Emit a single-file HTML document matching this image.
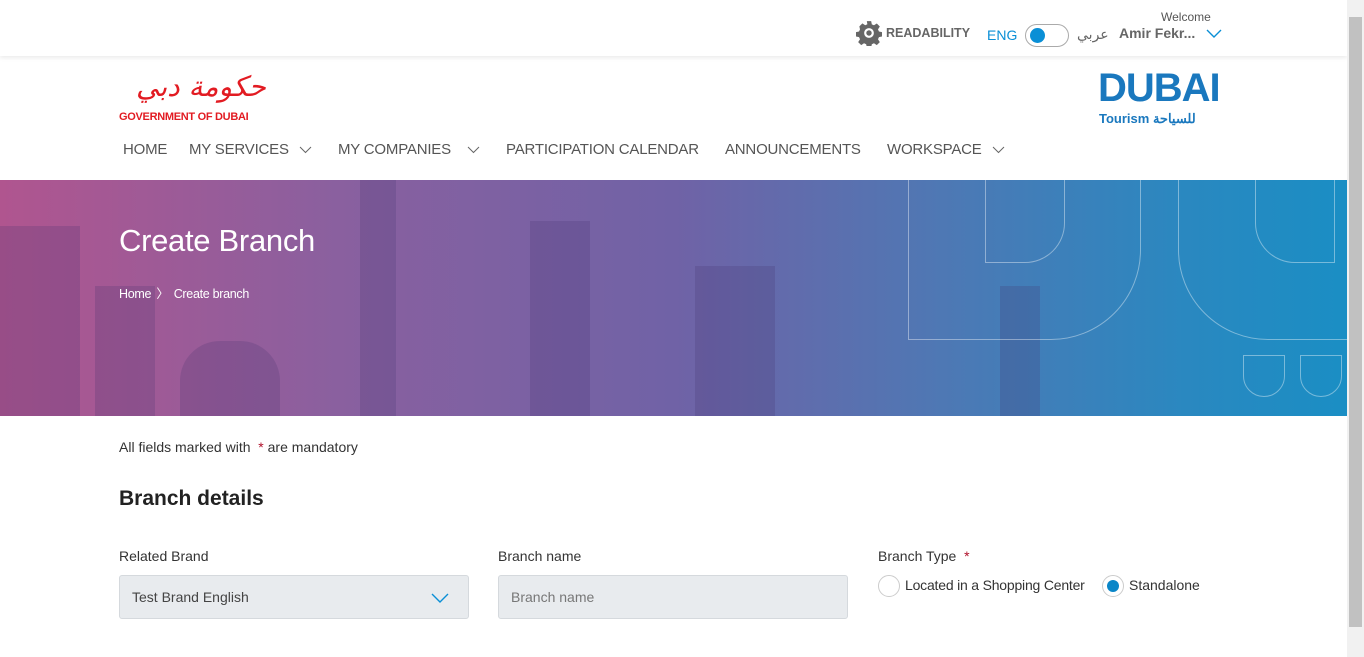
<!DOCTYPE html>
<html><head><meta charset="utf-8"><style>
*{box-sizing:border-box;margin:0;padding:0}
body{width:1364px;height:657px;overflow:hidden;font-family:"Liberation Sans","Noto Sans CJK SC",sans-serif;background:#fff;position:relative;color:#222}
.sb{position:absolute;right:0;top:0;width:17px;height:657px;background:#f1f1f1}
.sb .th{position:absolute;left:2px;top:17px;width:13px;height:610px;background:#c1c1c1}
.top{position:absolute;left:0;top:0;width:1347px;height:56px;background:#fff;box-shadow:0 2px 4px rgba(0,0,0,.08)}
.a{position:absolute;white-space:nowrap}
.nav{font-size:15px;color:#555;top:141px;letter-spacing:-.2px}
.banner{position:absolute;left:0;top:180px;width:1347px;height:236px;background:linear-gradient(90deg,#b0558f 0%,#8a609f 25%,#7062a6 50%,#4e78b4 70%,#2a88c0 88%,#1a8ec4 100%);overflow:hidden}
.bld{position:absolute;bottom:0;background:rgba(70,50,110,.22)}
.lbl{font-size:14px;color:#333}
.inp{position:absolute;top:575px;height:44px;width:350px;background:#e8ebee;border:1px solid #d5d9dd;border-radius:3px;font-size:14px;padding:13px 12px;color:#444}
.rad{position:absolute;top:575px;width:22px;height:22px;border-radius:50%;border:1px solid #ccc;background:#fff}
</style></head><body>
<div class="top">
 <svg class="a" style="left:856px;top:20px" width="26" height="26" viewBox="0 0 24 24"><path fill="#666" d="M10 1h4l.6 3 2 .9 2.6-1.7 2.8 2.8-1.7 2.6.9 2 3 .6v4l-3 .6-.9 2 1.7 2.6-2.8 2.8-2.6-1.7-2 .9-.6 3h-4l-.6-3-2-.9-2.6 1.7-2.8-2.8 1.7-2.6-.9-2-3-.6v-4l3-.6.9-2L3.1 5.9l2.8-2.8 2.6 1.7 2-.9z"/><circle cx="12" cy="12" r="4.5" fill="#fff"/><circle cx="12" cy="12" r="2.5" fill="#666"/></svg>
 <div class="a" style="left:886px;top:26px;font-size:12.5px;font-weight:bold;color:#666">READABILITY</div>
 <div class="a" style="left:987px;top:27px;font-size:14px;color:#0a8fd6">ENG</div>
 <div class="a" style="left:1025px;top:24px;width:44px;height:23px;border:1px solid #aaa;border-radius:12px"><div style="position:absolute;left:4px;top:3px;width:15px;height:15px;border-radius:50%;background:#0a8fd6"></div></div>
 <div class="a" style="left:1077px;top:26px;font-size:14px;color:#666">عربي</div>
 <div class="a" style="left:1161px;top:10px;font-size:12px;color:#555">Welcome</div>
 <div class="a" style="left:1119px;top:25px;font-size:14px;font-weight:bold;color:#666">Amir Fekr...</div>
 <svg class="a" style="left:1206px;top:29px" width="16" height="10"><path d="M1 1l7 7 7-7" stroke="#0a8fd6" fill="none" stroke-width="1.4"/></svg>
</div>
<div class="a" style="left:136px;top:70px;font-size:28px;color:#e21b22;font-family:'DejaVu Serif',serif;font-style:italic">حكومة دبي</div>
<div class="a" style="left:119px;top:111px;font-size:11px;font-weight:bold;color:#e21b22;letter-spacing:-.3px">GOVERNMENT OF DUBAI</div>
<div class="a" style="left:1098px;top:66px;font-size:40px;font-weight:bold;color:#1a78be;letter-spacing:-1px">DUBAI</div>
<div class="a" style="left:1099px;top:111px;font-size:13px;font-weight:bold;color:#1a78be">Tourism للسياحة</div>
<div class="a nav" style="left:123px">HOME</div>
<div class="a nav" style="left:189px">MY SERVICES</div>
<svg class="a" style="left:299px;top:146px" width="13" height="8"><path d="M1 1l5.5 5.5L12 1" stroke="#666" fill="none"/></svg>
<div class="a nav" style="left:338px">MY COMPANIES</div>
<svg class="a" style="left:467px;top:146px" width="13" height="8"><path d="M1 1l5.5 5.5L12 1" stroke="#666" fill="none"/></svg>
<div class="a nav" style="left:506px">PARTICIPATION CALENDAR</div>
<div class="a nav" style="left:725px">ANNOUNCEMENTS</div>
<div class="a nav" style="left:887px">WORKSPACE</div>
<svg class="a" style="left:992px;top:146px" width="13" height="8"><path d="M1 1l5.5 5.5L12 1" stroke="#666" fill="none"/></svg>
<div class="banner">
 <div class="bld" style="left:0;width:80px;height:190px"></div>
 <div class="bld" style="left:95px;width:60px;height:130px"></div>
 <div class="bld" style="left:180px;width:100px;height:75px;border-radius:40px 40px 0 0"></div>
 <div class="bld" style="left:360px;width:36px;height:236px"></div>
 <div class="bld" style="left:530px;width:60px;height:195px"></div>
 <div class="bld" style="left:695px;width:80px;height:150px"></div>
 <div class="bld" style="left:1000px;width:40px;height:130px"></div>
 <div style="position:absolute;left:908px;top:-20px;width:233px;height:180px;border:1px solid rgba(255,255,255,.4);border-radius:0 0 90px 0"></div>
 <div style="position:absolute;left:985px;top:-20px;width:80px;height:103px;border:1px solid rgba(255,255,255,.4);border-radius:0 0 40px 0"></div>
 <div style="position:absolute;left:1178px;top:-20px;width:200px;height:180px;border:1px solid rgba(255,255,255,.4);border-radius:0 0 0 90px"></div>
 <div style="position:absolute;left:1255px;top:-20px;width:80px;height:103px;border:1px solid rgba(255,255,255,.4);border-radius:0 0 0 40px"></div>
 <div style="position:absolute;left:1243px;top:175px;width:42px;height:42px;border:1px solid rgba(255,255,255,.4);border-radius:0 0 21px 21px"></div>
 <div style="position:absolute;left:1300px;top:175px;width:42px;height:42px;border:1px solid rgba(255,255,255,.4);border-radius:0 0 21px 21px"></div>
 <div class="a" style="left:119px;top:43px;font-size:31px;color:#fff;letter-spacing:-.3px">Create Branch</div>
 <div class="a" style="left:119px;top:103px;font-size:12.5px;color:#fff;letter-spacing:-.3px">Home <span style="margin:0 2px">〉</span> Create branch</div>
</div>
<div class="a lbl" style="left:119px;top:439px">All fields marked with &nbsp;<span style="color:#b0102a">*</span> are mandatory</div>
<div class="a" style="left:119px;top:487px;font-size:21px;font-weight:bold;color:#222">Branch details</div>
<div class="a lbl" style="left:119px;top:548px">Related Brand</div>
<div class="a lbl" style="left:498px;top:548px">Branch name</div>
<div class="a lbl" style="left:878px;top:548px">Branch Type &nbsp;<span style="color:#b0102a">*</span></div>
<div class="inp" style="left:119px">Test Brand English</div>
<svg class="a" style="left:431px;top:593px" width="18" height="11"><path d="M1 1l8 8 8-8" stroke="#0a8fd6" fill="none" stroke-width="1.4"/></svg>
<div class="inp" style="left:498px;color:#777">Branch name</div>
<div class="rad" style="left:878px"></div>
<div class="a lbl" style="left:905px;top:577px;letter-spacing:-.2px">Located in a Shopping Center</div>
<div class="rad" style="left:1102px"><div style="position:absolute;left:4px;top:4px;width:12px;height:12px;border-radius:50%;background:#0a86c8"></div></div>
<div class="a lbl" style="left:1129px;top:577px">Standalone</div>
<div class="sb"><div class="th"></div></div>
</body></html>
